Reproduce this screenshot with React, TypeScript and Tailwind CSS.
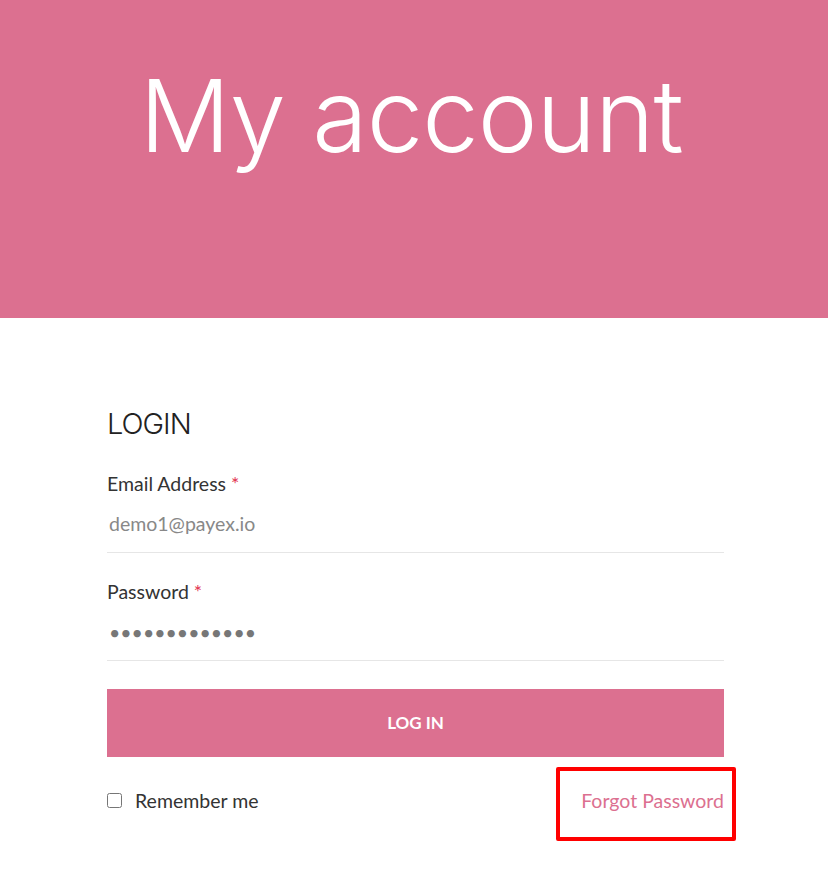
import React, { useState } from 'react'

const pink = 'bg-[#dc7090]'

export default function App() {
  const [email, setEmail] = useState('demo1@payex.io')
  const [password, setPassword] = useState('demo12345678!')
  const [remember, setRemember] = useState(false)

  return (
    <div className="min-h-[871px] bg-white font-['Lato','Liberation_Sans',sans-serif]">
      {/* Hero */}
      <div className={`${pink} h-[318px] flex items-start justify-center`}>
        <h1 className="mt-[55px] ml-[-6px] text-[101px] leading-[120px] font-light text-white font-['Inter','Noto_Sans',sans-serif] tracking-[-1px]">
          My account
        </h1>
      </div>

      {/* Login form */}
      <div className="ml-[107px] w-[617px] pt-[86px]">
        <h2 className="text-[29px] leading-[40px] text-[#222] font-['Inter','Noto_Sans',sans-serif] font-light tracking-[-1px]">LOGIN</h2>

        <form className="mt-[28px]" onSubmit={(e) => e.preventDefault()}>
          <label className="block text-[19.5px] leading-[24px] text-[#333]">
            Email Address <span className="text-[#e2344f]">*</span>
          </label>
          <input
            type="text"
            value={email}
            onChange={(e) => setEmail(e.target.value)}
            className="mt-[6px] w-full h-[51px] px-[2px] pb-[8px] text-[19.5px] text-[#888] border-b border-[#e6e6e6] outline-none"
          />

          <label className="block mt-[27px] text-[19.5px] leading-[24px] text-[#333]">
            Password <span className="text-[#e2344f]">*</span>
          </label>
          <input
            type="password"
            value={password}
            onChange={(e) => setPassword(e.target.value)}
            className="mt-[6px] w-full h-[51px] px-[2px] pb-[6px] text-[19.5px] text-[#777] border-b border-[#e6e6e6] outline-none"
          />

          <button
            type="submit"
            className={`${pink} mt-[28px] w-full h-[68px] text-white text-[17px] font-bold`}
          >
            LOG IN
          </button>

          <div className="mt-[29px] flex items-center justify-between">
            <label className="flex items-center gap-[13px] text-[19.5px] text-[#333]">
              <input
                type="checkbox"
                checked={remember}
                onChange={(e) => setRemember(e.target.checked)}
                className="w-[15px] h-[15px] m-0"
              />
              Remember me
            </label>
            <div className="relative">
              <a href="#" className="text-[19.5px] text-[#dc7090]">Forgot Password</a>
              <div className="absolute left-[-25px] top-[-19px] w-[180px] h-[74px] border-4 border-[#ff0000] rounded-[2px] pointer-events-none" />
            </div>
          </div>
        </form>
      </div>
    </div>
  )
}
